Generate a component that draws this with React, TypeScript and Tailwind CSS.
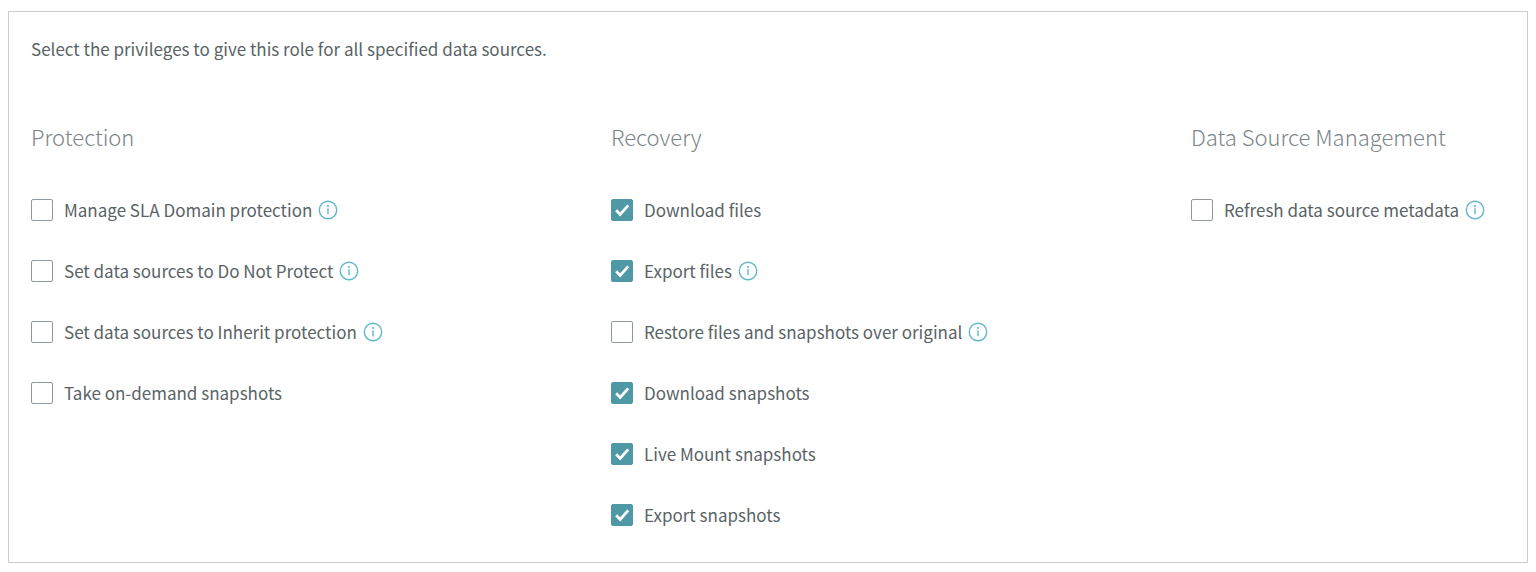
import { useState } from "react";

type Privilege = { label: string; checked?: boolean; info?: boolean };
type Group = { title: string; items: Privilege[] };

const groups: Group[] = [
  {
    title: "Protection",
    items: [
      { label: "Manage SLA Domain protection", info: true },
      { label: "Set data sources to Do Not Protect", info: true },
      { label: "Set data sources to Inherit protection", info: true },
      { label: "Take on-demand snapshots" },
    ],
  },
  {
    title: "Recovery",
    items: [
      { label: "Download files", checked: true },
      { label: "Export files", checked: true, info: true },
      { label: "Restore files and snapshots over original", info: true },
      { label: "Download snapshots", checked: true },
      { label: "Live Mount snapshots", checked: true },
      { label: "Export snapshots", checked: true },
    ],
  },
  {
    title: "Data Source Management",
    items: [{ label: "Refresh data source metadata", info: true }],
  },
];

function InfoButton({ label }: { label: string }) {
  return (
    <button type="button" aria-label={`About ${label}`} className="ml-1.5 shrink-0 text-[#62b6c8]">
      <svg viewBox="0 0 20 20" className="block size-5" fill="none" stroke="currentColor" strokeWidth="1.4">
        <circle cx="10" cy="10" r="8.7" />
        <path d="M10 8.2v6" />
        <circle cx="10" cy="5.9" r="1" fill="currentColor" stroke="none" />
      </svg>
    </button>
  );
}

function PrivilegeRow({ label, checked = false, info }: Privilege) {
  const [on, setOn] = useState(checked);
  return (
    <li className="flex h-6 items-center">
      <label className="flex items-center gap-[11px] whitespace-nowrap">
        <span className="grid size-[22px] shrink-0">
          <input
            type="checkbox"
            checked={on}
            onChange={(e) => setOn(e.target.checked)}
            className="peer col-start-1 row-start-1 size-[22px] appearance-none rounded-[2px] border border-[#8e989e] bg-white checked:border-[#4f98a6] checked:bg-[#4f98a6]"
          />
          <svg
            viewBox="0 0 22 22"
            className="pointer-events-none invisible col-start-1 row-start-1 size-[22px] peer-checked:visible"
            fill="none"
            stroke="white"
            strokeWidth="2.8"
          >
            <path d="M5.2 11.2l4 4.2 8-9" />
          </svg>
        </span>
        {label}
      </label>
      {info && <InfoButton label={label} />}
    </li>
  );
}

export default function App() {
  return (
    <main className="bg-white px-2 pt-[11px] pb-2 font-['Noto_Sans_CJK_SC','Noto_Sans',sans-serif] text-[17px] leading-6 text-[#596366]">
      <section className="border border-[#cccccc] px-[22px] pt-[25px] pb-[35px]">
        <p>Select the privileges to give this role for all specified data sources.</p>
        <div className="mt-[59px] grid grid-cols-[580fr_580fr_314fr]">
          {groups.map((group) => (
            <fieldset key={group.title} className="min-w-0">
              <legend className="text-[22px] leading-8 font-light text-[#7b8588]">{group.title}</legend>
              <ul className="mt-[46px] flex flex-col gap-[37px]">
                {group.items.map((item) => (
                  <PrivilegeRow key={item.label} {...item} />
                ))}
              </ul>
            </fieldset>
          ))}
        </div>
      </section>
    </main>
  );
}
